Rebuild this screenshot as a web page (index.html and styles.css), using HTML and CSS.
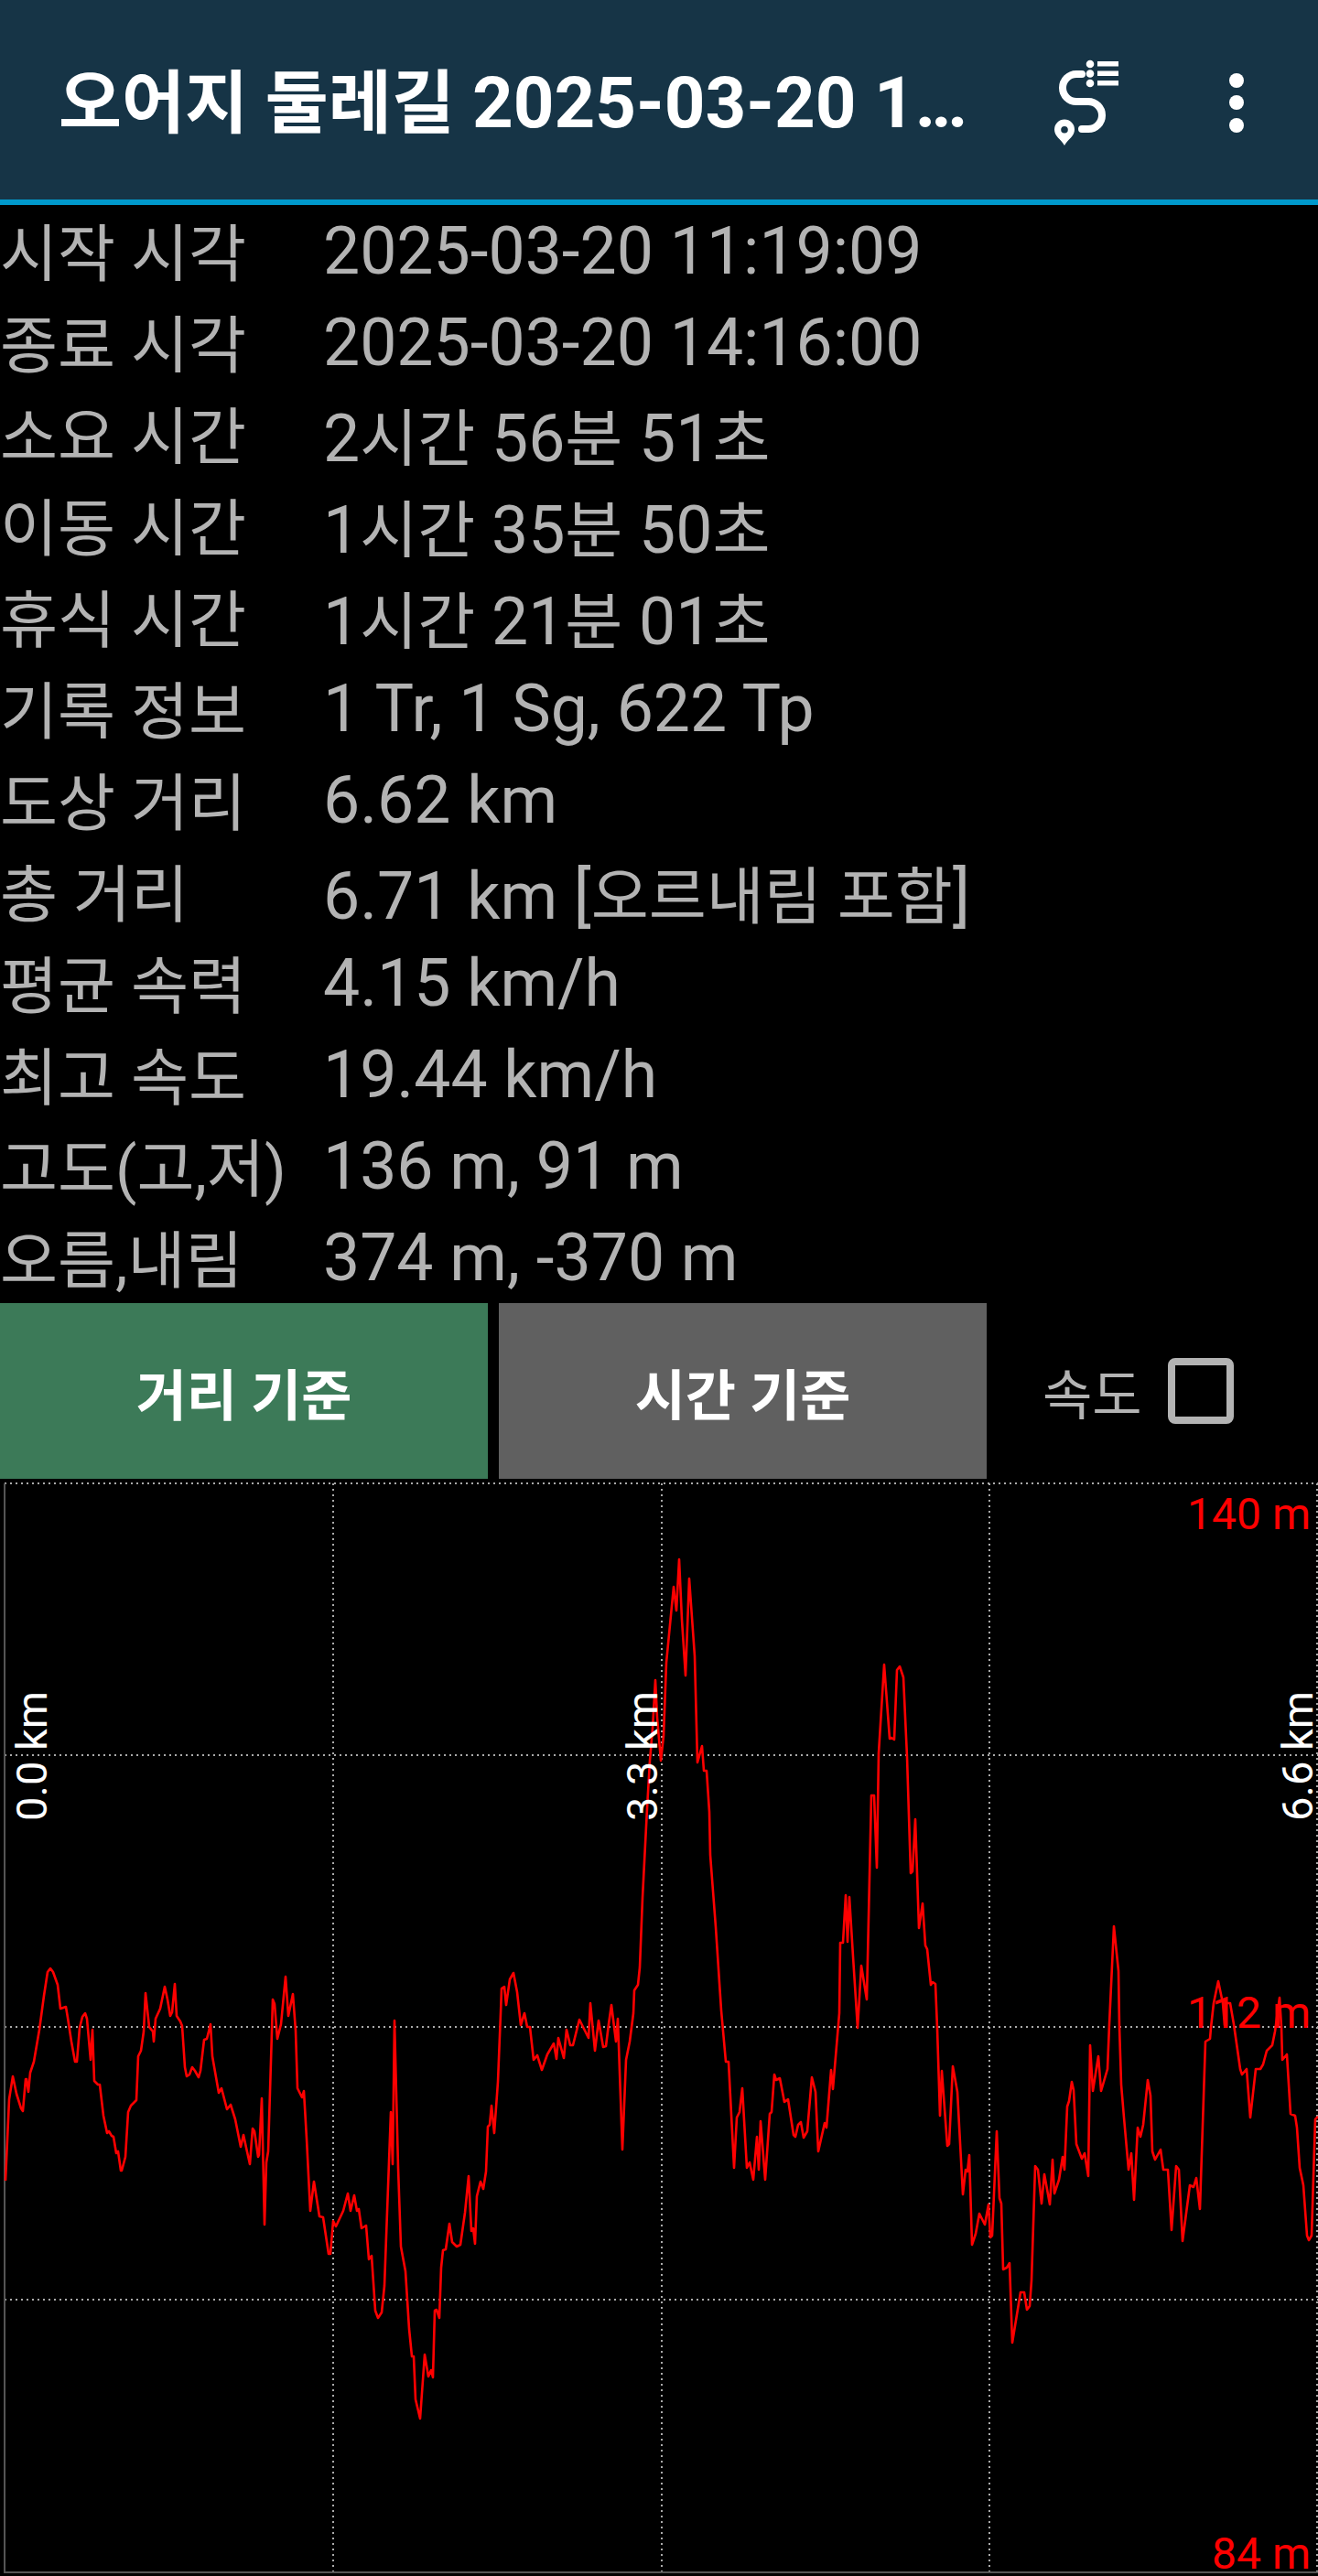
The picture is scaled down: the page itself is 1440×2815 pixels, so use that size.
FILE: index.html
```html
<!DOCTYPE html>
<html lang="ko">
<head>
  <meta charset="UTF-8" />
  <title>오어지 둘레길</title>
  <meta name="viewport" content="width=device-width, initial-scale=1.0" />
  <link rel="stylesheet" href="styles.css">
</head>
<body>

<!-- Toolbar -->
<header class="toolbar">
  <h1 class="title"><span class="ko">오어지 둘레길</span> 2025-03-20 1<span class="more">...</span></h1>
  <svg class="icon-route" viewBox="1150 60 80 105" aria-hidden="true">
    <path class="route-line" d="M1182 82H1176A15 15 0 0 0 1176 112H1189A15 15 0 0 1 1189 142H1182" />
    <path class="route-fill" fill-rule="evenodd" d="M1163 160C1159 153 1152 150 1152 142.500A11 11 0 0 1 1174 142.500C1174 150 1167 153 1163 160ZM1163 139A3.800 3.800 0 1 0 1163 146.600A3.800 3.800 0 1 0 1163 139Z" />
    <circle class="route-fill" cx="1191" cy="71" r="4.300" />
    <circle class="route-fill" cx="1191" cy="81.500" r="4.300" />
    <circle class="route-fill" cx="1191" cy="92" r="4.300" />
    <rect class="route-fill" x="1199" y="68" width="23" height="5.500" />
    <rect class="route-fill" x="1199" y="78.500" width="23" height="5.500" />
    <rect class="route-fill" x="1199" y="89" width="23" height="5.500" />
  </svg>
  <div class="menu-dots"><span></span><span></span><span></span></div>
</header>

<!-- Track info -->
<section class="info">
  <div class="row"><span class="label ko">시작 시각</span><span>2025-03-20 11:19:09</span></div>
  <div class="row"><span class="label ko">종료 시각</span><span>2025-03-20 14:16:00</span></div>
  <div class="row"><span class="label ko">소요 시간</span><span>2<span class="ko">시간</span> 56<span class="ko">분</span> 51<span class="ko">초</span></span></div>
  <div class="row"><span class="label ko">이동 시간</span><span>1<span class="ko">시간</span> 35<span class="ko">분</span> 50<span class="ko">초</span></span></div>
  <div class="row"><span class="label ko">휴식 시간</span><span>1<span class="ko">시간</span> 21<span class="ko">분</span> 01<span class="ko">초</span></span></div>
  <div class="row"><span class="label ko">기록 정보</span><span>1 Tr, 1 Sg, 622 Tp</span></div>
  <div class="row"><span class="label ko">도상 거리</span><span>6.62 km</span></div>
  <div class="row"><span class="label ko">총 거리</span><span>6.71 km [<span class="ko">오르내림 포함</span>]</span></div>
  <div class="row"><span class="label ko">평균 속력</span><span>4.15 km/h</span></div>
  <div class="row"><span class="label ko">최고 속도</span><span>19.44 km/h</span></div>
  <div class="row"><span class="label ko">고도(고,저)</span><span>136 m, 91 m</span></div>
  <div class="row"><span class="label ko">오름,내림</span><span>374 m, -370 m</span></div>
</section>

<!-- Chart mode -->
<div class="controls">
  <button class="tab tab-active">거리 기준</button>
  <button class="tab">시간 기준</button>
  <div class="speed"><span>속도</span><span class="checkbox"></span></div>
</div>

<!-- Elevation chart -->
<section class="chart">
  <svg class="plot" viewBox="0 1616 1440 1199" aria-hidden="true">
    <path class="grid" d="M5 1621H1440M5 1918H1440M5 2215H1440M5 2513H1440" />
    <path class="grid" d="M364 1621V2810M723 1621V2810M1081 1621V2810M1439 1621V2810" />
    <path class="axis" d="M5 1621V2811H1440" />
    <polyline class="elevation" points="6,2383 10,2294 14,2269 18,2288 23,2304 25,2307 28,2272 29,2272 31,2286 33,2265 37,2253 43,2218 48,2181 52,2155 55,2151 58,2155 63,2169 66,2195 72,2193 74,2205 78,2231 82,2253 84,2253 87,2216 90,2204 93,2200 95,2206 99,2251 101,2218 103,2274 107,2278 109,2278 113,2312 117,2331 119,2329 122,2334 124,2335 127,2353 129,2351 132,2372 133,2372 137,2357 140,2308 143,2301 149,2295 151,2247 154,2241 157,2220 159,2178 163,2215 167,2220 168,2231 170,2206 175,2195 180,2171 183,2185 186,2203 188,2199 191,2168 193,2203 197,2209 199,2214 202,2259 204,2269 207,2267 210,2259 213,2263 217,2270 219,2263 223,2229 226,2228 230,2212 232,2247 239,2287 242,2282 248,2305 252,2300 257,2316 263,2346 266,2333 269,2347 273,2365 276,2326 278,2329 282,2357 283,2355 286,2293 289,2431 291,2363 293,2351 297,2220 298,2185 300,2190 303,2228 307,2212 312,2160 315,2203 320,2179 323,2219 325,2282 330,2292 332,2285 335,2337 339,2416 343,2384 349,2422 353,2423 359,2463 361,2463 364,2427 367,2433 375,2416 380,2397 383,2416 387,2399 390,2416 392,2414 395,2435 400,2432 403,2469 406,2465 410,2525 413,2533 417,2527 420,2498 427,2308 429,2365 431,2208 435,2369 438,2455 443,2482 447,2545 450,2575 452,2575 454,2622 459,2643 464,2573 468,2597 471,2590 473,2598 475,2525 477,2524 480,2533 482,2478 484,2459 487,2458 491,2430 494,2450 499,2455 503,2453 508,2418 512,2378 515,2438 517,2435 519,2452 521,2400 525,2384 528,2392 531,2373 533,2324 535,2322 537,2301 540,2331 544,2275 547,2200 548,2173 551,2171 553,2191 557,2163 561,2156 565,2177 569,2213 573,2200 576,2215 579,2215 583,2251 587,2246 592,2262 598,2245 605,2233 608,2250 610,2227 616,2249 619,2218 623,2235 626,2235 633,2207 643,2227 645,2189 650,2241 654,2208 659,2237 662,2236 665,2212 668,2191 673,2231 675,2206 680,2349 684,2251 688,2231 692,2200 693,2175 697,2169 699,2150 702,2074 705,2015 707,1976 710,1924 713,1889 716,1836 718,1877 722,1924 725,1897 728,1817 736,1734 739,1760 742,1704 745,1770 749,1831 753,1725 759,1810 762,1926 767,1908 769,1935 772,1935 775,1980 776,2027 782,2106 788,2197 793,2253 796,2253 802,2369 805,2314 808,2308 811,2282 816,2369 819,2363 823,2382 827,2335 829,2371 831,2318 836,2382 841,2310 843,2308 846,2267 848,2273 852,2271 857,2297 861,2294 867,2333 869,2335 872,2322 875,2319 878,2336 882,2329 887,2270 891,2286 894,2351 901,2320 903,2325 908,2262 910,2283 917,2200 918,2123 921,2123 924,2071 926,2122 928,2073 932,2138 937,2216 941,2148 947,2185 952,1962 955,1962 958,2041 960,1916 966,1819 972,1900 974,1899 977,1901 980,1825 983,1821 987,1833 991,1920 995,2047 997,2045 1000,1988 1004,2107 1008,2080 1011,2126 1013,2130 1017,2169 1019,2166 1022,2168 1024,2217 1027,2312 1029,2263 1035,2345 1037,2343 1041,2258 1046,2286 1052,2398 1055,2371 1057,2373 1059,2355 1062,2453 1066,2441 1070,2419 1076,2431 1080,2409 1082,2445 1084,2443 1089,2329 1092,2402 1094,2408 1096,2480 1100,2478 1103,2473 1106,2560 1115,2505 1119,2505 1122,2524 1125,2520 1127,2492 1131,2367 1134,2371 1138,2408 1141,2376 1147,2409 1150,2360 1152,2397 1157,2382 1161,2357 1163,2371 1166,2302 1168,2296 1171,2275 1173,2284 1176,2343 1182,2359 1185,2353 1189,2378 1191,2235 1194,2285 1200,2247 1203,2285 1210,2261 1212,2212 1217,2105 1222,2154 1223,2215 1225,2278 1228,2314 1233,2371 1236,2353 1239,2404 1243,2325 1246,2335 1249,2322 1254,2273 1257,2290 1259,2351 1262,2360 1268,2349 1271,2371 1276,2371 1280,2437 1285,2367 1288,2371 1292,2449 1300,2388 1304,2390 1307,2380 1311,2414 1317,2231 1322,2228 1323,2216 1326,2189 1331,2165 1336,2189 1338,2213 1340,2189 1344,2189 1348,2212 1355,2261 1357,2267 1362,2261 1366,2314 1372,2261 1377,2261 1380,2256 1384,2241 1390,2235 1393,2220 1398,2183 1400,2215 1401,2251 1406,2245 1410,2310 1415,2312 1417,2325 1420,2369 1424,2388 1428,2443 1430,2448 1433,2443 1437,2316 1440,2313" />
  </svg>
  <span class="x-label x-start">0.0 km</span>
  <span class="x-label x-mid">3.3 km</span>
  <span class="x-label x-end">6.6 km</span>
  <span class="y-label y-top">140 m</span>
  <span class="y-label y-mid">112 m</span>
  <span class="y-label y-bottom">84 m</span>
</section>

</body>
</html>
```

FILE: styles.css
```css
* { box-sizing: border-box; }
body {
  margin: 0;
  background: #000;
  font-family: Roboto, "Noto Sans CJK KR", sans-serif;
}

.toolbar {
  height: 224px;
  background: #163446;
  border-bottom: 6px solid #0099cc;
  display: flex;
  align-items: center;
  padding-left: 64px;
}
.title {
  margin: 0 0 6px;
  width: 1086px;
  color: #fff;
  font-size: 78px;
  font-weight: 700;
  white-space: nowrap;
  overflow: hidden;
}
.title .ko {
  font-size: 75px;
}
.title .more {
  letter-spacing: -5px;
}
.icon-route {
  width: 80px;
  height: 105px;
  margin-top: 5px;
}
.route-line {
  fill: none;
  stroke: #fff;
  stroke-width: 8;
  stroke-linecap: round;
}
.route-fill {
  fill: #fff;
}
.menu-dots {
  display: flex;
  flex-direction: column;
  gap: 8.500px;
  margin-left: 113px;
  margin-top: 6px;
}
.menu-dots span {
  width: 16px;
  height: 16px;
  border-radius: 50%;
  background: #fff;
}

.row {
  height: 100px;
  display: flex;
  align-items: center;
  color: #b3b3b3;
  font-size: 71.500px;
  white-space: nowrap;
}
.label {
  width: 353px;
  margin-top: -3px;
}
.ko {
  font-size: 68.500px;
}

.controls {
  height: 192px;
  display: flex;
}
.tab {
  width: 533px;
  margin-right: 12px;
  padding: 0;
  border: none;
  background: #606060;
  color: #fff;
  font-family: inherit;
  font-size: 60px;
  font-weight: 700;
}
.tab-active {
  background: #3c7a58;
}
.speed {
  display: flex;
  align-items: center;
  gap: 28px;
  margin-left: 49px;
  color: #b3b3b3;
  font-size: 59px;
}
.checkbox {
  width: 72px;
  height: 72px;
  border: 8px solid #b3b3b3;
  border-radius: 8px;
}

.chart {
  position: relative;
  height: 1199px;
  overflow: hidden;
}
.plot {
  display: block;
  width: 1440px;
  height: 1199px;
}
.grid {
  fill: none;
  stroke: #aaa;
  stroke-width: 2;
  stroke-dasharray: 2 4;
}
.axis {
  fill: none;
  stroke: #555;
  stroke-width: 2;
}
.elevation {
  fill: none;
  stroke: #f00;
  stroke-width: 2.600;
  stroke-linejoin: round;
}

/* labels sit on top of the plot */
.x-label {
  position: absolute;
  top: 232px;
  color: #fff;
  font-size: 47px;
  line-height: 44px;
  writing-mode: vertical-rl;
  transform: rotate(180deg);
  white-space: nowrap;
}
.x-start { left: 13px; }
.x-mid { left: 680px; }
.x-end { left: 1396px; }
.y-label {
  position: absolute;
  right: 8px;
  color: #f00;
  font-size: 48px;
  line-height: 44px;
}
.y-top { top: 17px; }
.y-mid { top: 562px; }
.y-bottom { top: 1153px; }
```
